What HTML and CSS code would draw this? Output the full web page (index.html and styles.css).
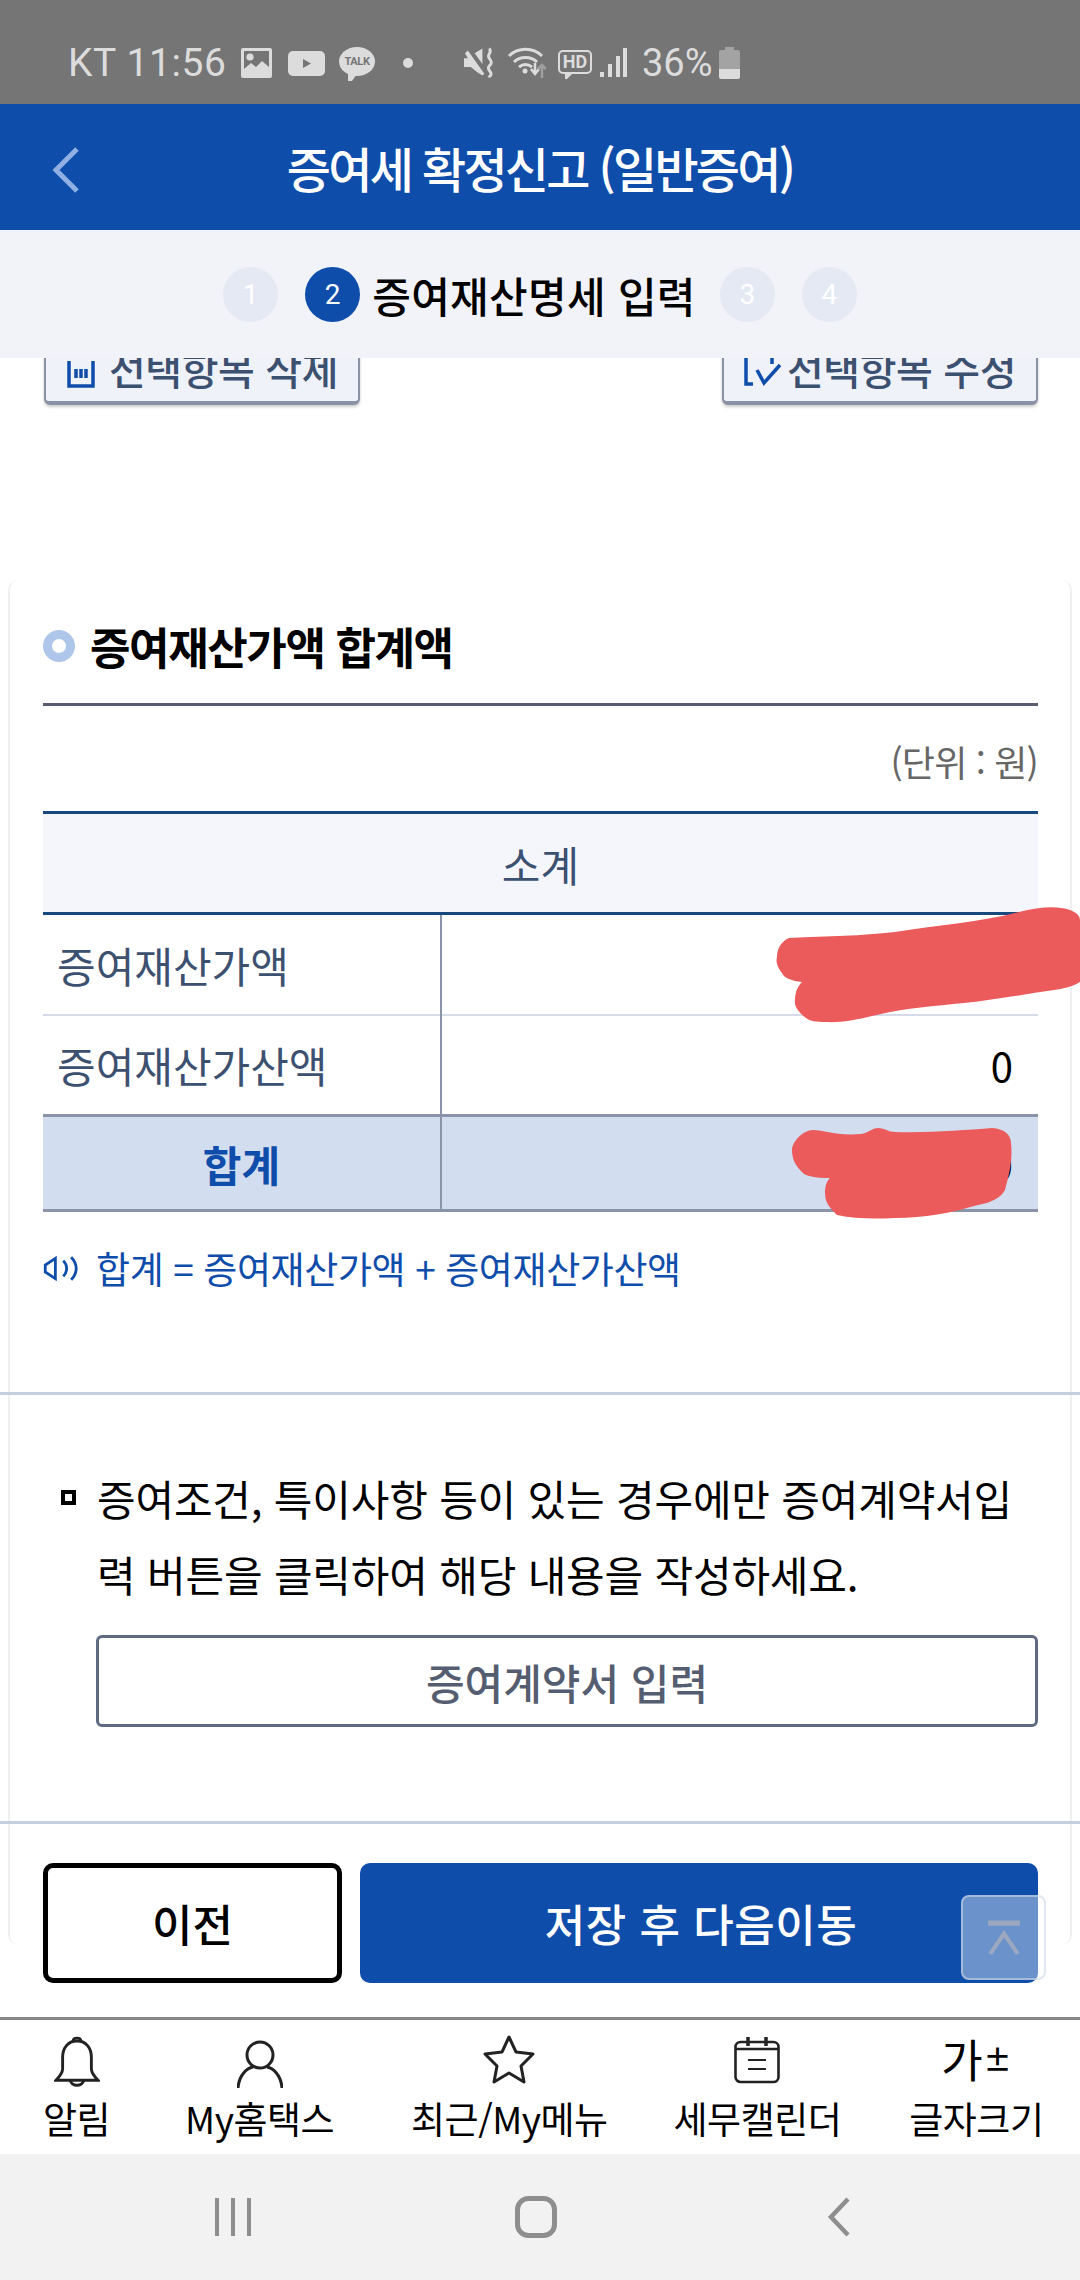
FILE: index.html
```html
<!DOCTYPE html>
<html lang="ko">
<head>
<meta charset="utf-8">
<title>증여세 확정신고</title>
<link rel="stylesheet" href="styles.css">
</head>
<body>
<div class="phone">
  <div class="status">
    <span class="status-text carrier">KT 11:56</span>
    <svg class="si si-img" viewBox="0 0 31 30"><path fill="#dcdcdc" fill-rule="evenodd" d="M2 0h27a2 2 0 0 1 2 2v26a2 2 0 0 1-2 2H2a2 2 0 0 1-2-2V2a2 2 0 0 1 2-2zm1 3v18l7-6 5 4 6-6 7 6V3z"/><circle cx="9" cy="9" r="3.6" fill="#dcdcdc"/></svg>
    <svg class="si si-yt" viewBox="0 0 37 25"><rect width="37" height="25" rx="5" fill="#dcdcdc"/><path d="M15 8l8 4.500-8 4.500z" fill="#757575"/></svg>
    <span class="si-talk"><span class="talk-label">TALK</span></span>
    <span class="si-dot"></span>
    <svg class="si si-mute" viewBox="0 0 32 32"><path fill="#dcdcdc" d="M0 11h4L1 6l3-3 17 24-2 2-6-4-6-5H0zM11 6l8-5v16z"/><path fill="none" stroke="#dcdcdc" stroke-width="3" d="M26 1c4 4-3 6 0 10s3 5 0 8 2 6 2 8-2 3-2 4"/></svg>
    <svg class="si si-wifi" viewBox="0 0 38 32"><g fill="none" stroke="#dcdcdc" stroke-width="3"><path d="M1 9c9-9 24-9 33 0"/><path d="M6 15c6-6 17-6 23 0"/><path d="M11 20c4-3 9-3 13 0"/></g><circle cx="17" cy="24" r="2.500" fill="#dcdcdc"/><path d="M27 16v9m-4-3l4 5 4-5" fill="none" stroke="#dcdcdc" stroke-width="2.500"/><path d="M34 31v-13m-4 4l4-4 4 4" fill="none" stroke="#a0a0a0" stroke-width="2.500"/></svg>
    <span class="si-hd">HD</span>
    <svg class="si si-sig" viewBox="0 0 27 32"><g fill="#dcdcdc"><rect x="0" y="25" width="4" height="5"/><rect x="8" y="17" width="4" height="13"/><rect x="16" y="9" width="4" height="21"/><rect x="23" y="1" width="4" height="29"/></g></svg>
    <span class="status-text pct">36%</span>
    <svg class="si si-bat" viewBox="0 0 21 32"><path fill="#a3a3a3" d="M6 0h9v3h4a2 2 0 0 1 2 2v17H0V5a2 2 0 0 1 2-2h4z"/><path fill="#dcdcdc" d="M0 22h21v8a2 2 0 0 1-2 2H2a2 2 0 0 1-2-2z"/></svg>
  </div>

  <header class="app-header">
    <svg class="back" viewBox="0 0 28 46"><path d="M25 2L4 23l21 21" fill="none" stroke="#8fb0e3" stroke-width="5"/></svg>
    <h1 class="app-title">증여세 확정신고 (일반증여)</h1>
  </header>

  <div class="stepper">
    <span class="step">1</span>
    <span class="step step-on">2</span>
    <span class="step-name">증여재산명세 입력</span>
    <span class="step step-3">3</span>
    <span class="step">4</span>
  </div>

  <main class="scroll">
    <div class="card-edge"></div>

    <div class="actions">
      <button class="act-btn">
        <svg class="act-icon icon-del" viewBox="0 0 30 38"><path d="M1 3h28M3 10v25h24V10M10 18v9M15 18v9M20 18v9" fill="none" stroke="#0f4dab" stroke-width="3.500"/></svg>
        선택항목 삭제
      </button>
      <button class="act-btn">
        <svg class="act-icon icon-edit" viewBox="0 0 40 38"><path d="M10 3H2v30h7M22 3h6v10" fill="none" stroke="#0f4dab" stroke-width="3.500"/><path d="M13 19l7 13 16-18" fill="none" stroke="#0f4dab" stroke-width="3.500"/></svg>
        선택항목 수정
      </button>
    </div>

    <section class="block">
      <h2 class="sec-title"><span class="ring"></span>증여재산가액 합계액</h2>
      <p class="unit">(단위 : 원)</p>
      <table class="sum">
        <colgroup><col class="col-a"><col></colgroup>
        <thead><tr><th colspan="2" class="sum-head">소계</th></tr></thead>
        <tbody>
          <tr class="row-1"><th class="lbl">증여재산가액</th><td class="val"></td></tr>
          <tr class="row-2"><th class="lbl">증여재산가산액</th><td class="val">0</td></tr>
          <tr class="row-t"><th class="lbl-t">합계</th><td class="val">0</td></tr>
        </tbody>
      </table>
      <p class="note">
        <svg class="note-icon" viewBox="0 0 32 24"><path d="M11 3L2 9v6l9 6z" fill="none" stroke="#0f4dab" stroke-width="2.500"/><path d="M18 5c4 4 4 10 0 14M25 2c6 6 6 14 0 20" fill="none" stroke="#0f4dab" stroke-width="2.500"/></svg>
        합계 = 증여재산가액 + 증여재산가산액
      </p>
    </section>

    <hr class="rule rule-a">

    <section class="block">
      <div class="para">
        <span class="sq"></span>
        <p class="para-text">증여조건, 특이사항 등이 있는 경우에만 증여계약서입력 버튼을 클릭하여 해당 내용을 작성하세요.</p>
      </div>
      <button class="contract">증여계약서 입력</button>
    </section>

    <hr class="rule rule-b">

    <div class="foot-btns">
      <button class="btn-prev">이전</button>
      <button class="btn-next">저장 후 다음이동</button>
    </div>

    <div class="to-top">
      <svg viewBox="0 0 32 34"><path d="M1 3h30" stroke="#9ba8bf" stroke-width="5"/><path d="M3 32l13-19 13 19" fill="none" stroke="#9ba8bf" stroke-width="4"/></svg>
    </div>

    <svg class="scribble" viewBox="0 358 1080 1659">
      <path fill="#ec5b5b" d="M789 938C830 936 860 936 895 932C940 925 980 922 1019 912C1035 908 1050 906 1061 908C1072 909 1080 914 1080 920L1080 982C1072 987 1062 989 1054 990C1025 994 995 1000 964 1003C935 1006 905 1008 881 1014C860 1019 842 1023 826 1022C815 1022 810 1021 806 1018C798 1012 794 1006 795 1000C795 992 798 986 802 982C792 981 784 978 782 973C776 965 776 960 777 957C777 948 782 941 789 938Z"/>
      <path fill="#ec5b5b" d="M792 1150C792 1142 803 1130 813 1130C825 1130 835 1136 861 1134C868 1133 872 1128 878 1128C885 1128 888 1132 895 1132C930 1133 965 1130 992 1128C1005 1129 1011 1135 1011 1143C1013 1160 1009 1175 1005 1190C1001 1198 990 1203 978 1205C950 1213 925 1218 895 1218C875 1219 855 1219 837 1215C830 1208 825 1203 825 1193C825 1187 826 1182 830 1178C815 1178 805 1176 802 1172C796 1166 792 1160 792 1150Z"/>
    </svg>
  </main>

  <nav class="tabbar">
    <a class="tab">
      <span class="tab-ic"><svg class="ti-bell" viewBox="0 0 48 56"><g fill="none" stroke="#222" stroke-width="3"><path d="M24 5c-10 0-15 8-15 17v12c0 4-3 8-7 12h44c-4-4-7-8-7-12V22c0-9-5-17-15-17z"/><path d="M20 5c0-4 8-4 8 0"/><path d="M17 46c1 7 13 7 14 0"/></g></svg></span>
      <span class="tab-label">알림</span>
    </a>
    <a class="tab">
      <span class="tab-ic"><svg class="ti-user" viewBox="0 0 46 50"><g fill="none" stroke="#222" stroke-width="3"><circle cx="23" cy="15" r="13"/><path d="M1 48c1-13 9-20 15-21M45 48c-1-13-9-20-15-21"/></g></svg></span>
      <span class="tab-label">My홈택스</span>
    </a>
    <a class="tab tab-c">
      <span class="tab-ic"><svg class="ti-star" viewBox="0 0 52 50"><path d="M26 2l7 15 17 2-12 12 3 16-15-9-15 9 3-16L2 19l17-2z" fill="none" stroke="#222" stroke-width="3" stroke-linejoin="round"/></svg></span>
      <span class="tab-label">최근/My메뉴</span>
    </a>
    <a class="tab tab-d">
      <span class="tab-ic"><svg class="ti-cal" viewBox="0 0 46 48"><g fill="none" stroke="#222" stroke-width="2.600"><rect x="1.500" y="6" width="43" height="40" rx="5"/><path d="M1.500 13h43"/><path d="M14 1v9M32 1v9" stroke-width="3.500"/><path d="M14 24h18M14 33h18" stroke-width="1.800"/></g></svg></span>
      <span class="tab-label">세무캘린더</span>
    </a>
    <a class="tab tab-e">
      <span class="tab-ic tab-ga"><span class="ga">가</span><span class="pm">±</span></span>
      <span class="tab-label">글자크기</span>
    </a>
  </nav>

  <div class="navbar">
    <svg class="nav-i nav-recent" viewBox="0 0 38 40"><path d="M3 1v38M19 1v38M35 1v38" stroke="#8e8e8e" stroke-width="4"/></svg>
    <svg class="nav-i nav-home" viewBox="0 0 42 42"><rect x="2.500" y="2.500" width="37" height="37" rx="11" fill="none" stroke="#8e8e8e" stroke-width="5"/></svg>
    <svg class="nav-i nav-back" viewBox="0 0 24 40"><path d="M21 2L4 20l17 18" fill="none" stroke="#8e8e8e" stroke-width="4.500"/></svg>
  </div>
</div>
</body>
</html>
```

FILE: styles.css
```css
* { box-sizing: border-box; }
html, body { margin: 0; padding: 0; background: #fff; }
body { font-family: "Noto Sans CJK KR", "Noto Sans", sans-serif; color: #000; }
button { font-family: inherit; cursor: pointer; padding: 0; }
p, h1, h2 { margin: 0; }

.phone { width: 1080px; height: 2280px; display: flex; flex-direction: column; overflow: hidden; }

/* status bar */
.status { height: 104px; flex: none; background: #757575; display: flex; align-items: center; padding: 22px 0 0 68px; }
.status-text { font-family: Roboto, sans-serif; font-size: 38px; color: #dcdcdc; line-height: 44px; }
.carrier { width: 156px; font-size: 39px; letter-spacing: 0.6px; white-space: nowrap; }
.si { display: block; flex: none; }
.si-img { width: 31px; height: 30px; margin-left: 17px; }
.si-yt { width: 37px; height: 25px; margin-left: 16px; }
.si-talk { width: 36px; height: 29px; margin: -4px 0 0 14px; border-radius: 50%; background: #dcdcdc; display: flex; align-items: center; justify-content: center; position: relative; }
.si-talk::after { content: ""; position: absolute; left: 9px; bottom: -5px; border-left: 4px solid #dcdcdc; border-right: 5px solid transparent; border-top: 7px solid #dcdcdc; }
.talk-label { font-family: Roboto, sans-serif; font-size: 11px; font-weight: 700; color: #757575; letter-spacing: -0.4px; }
.si-dot { width: 10px; height: 10px; border-radius: 50%; background: #dcdcdc; margin-left: 28px; }
.si-mute { width: 31px; height: 32px; margin-left: 51px; }
.si-wifi { width: 38px; height: 32px; margin-left: 13px; }
.si-hd { width: 34px; height: 24px; margin: -3px 0 0 12px; border: 2px solid #dcdcdc; border-radius: 5px; font-family: Roboto, sans-serif; font-size: 18px; font-weight: 700; line-height: 20px; text-align: center; color: #dcdcdc; position: relative; }
.si-hd::after { content: ""; position: absolute; left: 5px; bottom: -7px; border-left: 2px solid #dcdcdc; border-right: 5px solid transparent; border-top: 5px solid #dcdcdc; }
.si-sig { width: 27px; height: 32px; margin-left: 8px; }
.pct { margin-left: 15px; width: 71px; white-space: nowrap; }
.si-bat { width: 21px; height: 32px; margin-left: 6px; }

/* header */
.app-header { height: 126px; flex: none; background: #0f4dab; display: flex; align-items: center; justify-content: center; position: relative; }
.back { position: absolute; left: 52px; top: 43px; width: 28px; height: 46px; }
.app-title { font-size: 48px; font-weight: 500; color: #fff; letter-spacing: -2.700px; white-space: nowrap; }

/* stepper */
.stepper { height: 128px; flex: none; background: #f1f3f9; display: flex; align-items: center; justify-content: center; }
.step { width: 55px; height: 55px; border-radius: 50%; background: #e4e9f4; color: #fff; font-family: Roboto, sans-serif; font-size: 28px; display: flex; align-items: center; justify-content: center; margin-left: 27px; }
.step:first-child { margin-left: 0; }
.step-on { background: #0f4dab; }
.step-3 { margin-left: 24px; }
.step-name { font-size: 42px; font-weight: 500; margin-left: 12px; letter-spacing: 0.3px; white-space: nowrap; }

/* scroll area */
.scroll { flex: 1; position: relative; overflow: hidden; background: #fff; z-index: 0; }
.card-edge { position: absolute; z-index: -1; left: 8px; right: 8px; top: 222px; height: 1365px; border: 2px solid #f0f0f0; border-top: 0; border-bottom: 0; border-radius: 10px; }

.actions { height: 52px; overflow: hidden; display: flex; justify-content: space-between; padding: 0 42px 0 44px; position: relative; }
.act-btn { width: 316px; height: 73px; margin-top: -26px; background: #eff2f9; border: 2px solid #8a93a5; border-bottom-width: 4px; border-radius: 6px; color: #3c5070; font-size: 40px; font-weight: 500; display: flex; align-items: center; justify-content: center; white-space: nowrap; box-shadow: 0 2px 3px rgba(0,0,0,.2); letter-spacing: -0.4px; }
.act-icon { height: 38px; flex: none; margin-top: 4px; }
.icon-del { width: 30px; margin-right: 13px; }
.icon-edit { width: 40px; margin-right: 3px; }

.block { padding: 0 42px 0 43px; position: relative; }
.sec-title { padding-bottom: 25px; font-size: 44px; font-weight: 700; line-height: 64px; letter-spacing: -1.400px; border-bottom: 3px solid #5a5d70; display: flex; align-items: center; gap: 15px; white-space: nowrap; }
.ring { width: 32px; height: 32px; border-radius: 50%; border: 9px solid #aec6e9; flex: none; }
.actions + .block { padding-top: 204px; }
.unit { margin-top: 30px; margin-bottom: 25px; font-size: 36px; line-height: 50px; text-align: right; color: #666; letter-spacing: -0.800px; }

.sum { width: 100%; border-collapse: collapse; table-layout: fixed; }
.col-a { width: 398px; }
.sum-head { height: 101px; background: #f4f6fb; border-top: 3px solid #17497f; border-bottom: 3px solid #17497f; font-size: 42px; font-weight: 400; color: #3c5070; }
.lbl { font-size: 42px; font-weight: 400; color: #3c5070; text-align: left; padding: 0 0 0 14px; border-right: 2px solid #8a93a8; white-space: nowrap; }
.lbl-t { font-size: 42px; font-weight: 700; color: #0f4dab; text-align: center; border-right: 2px solid #8a93a8; }
.val { font-size: 40px; text-align: right; padding: 0 25px 0 0; }
.row-1 { height: 101px; border-bottom: 2px solid #d5dbe8; }
.row-2 { height: 101px; border-bottom: 3px solid #8a93a8; }
.row-t { height: 95px; background: #d2deef; border-bottom: 3px solid #8a93a8; }

.note { margin-top: 31px; font-size: 37px; line-height: 50px; color: #0f4dab; display: flex; align-items: center; gap: 17px; letter-spacing: -0.400px; white-space: nowrap; }
.note-icon { width: 36px; height: 27px; flex: none; }

.rule { border: 0; height: 3px; background: #c5d0de; margin: 0; }
.rule-a { margin-top: 99px; }
.rule-b { margin-top: 94px; }

.para { display: flex; align-items: flex-start; margin-top: 65px; }
.sq { width: 15px; height: 15px; border: 4px solid #000; margin: 30px 0 0 18px; flex: none; }
.para-text { margin-left: 21px; font-size: 42px; line-height: 76px; letter-spacing: -0.200px; }
.contract { display: block; width: 942px; height: 92px; margin: 23px 0 0 53px; background: #fff; border: 3px solid #5f6a80; border-radius: 6px; font-size: 42px; font-weight: 500; color: #555e70; letter-spacing: 0; }

.foot-btns { display: flex; gap: 18px; padding: 0 42px 0 43px; margin-top: 39px; }
.btn-prev { width: 299px; height: 120px; background: #fff; border: 5px solid #000; border-radius: 10px; font-size: 44px; font-weight: 500; color: #000; }
.btn-next { flex: 1; height: 120px; background: #0f4dab; border: 0; border-radius: 10px; font-size: 44px; font-weight: 500; color: #fff; padding-left: 4px; letter-spacing: 0.5px; }

.to-top { position: absolute; left: 961px; top: 1537px; width: 85px; height: 85px; background: rgba(255,255,255,.39); border: 2px solid rgba(205,215,230,.6); border-radius: 8px; display: flex; align-items: center; justify-content: center; }
.to-top svg { width: 34px; height: 36px; }

.scribble { position: absolute; left: 0; top: 0; width: 1080px; height: 1659px; pointer-events: none; }

/* tab bar */
.tabbar { height: 137px; flex: none; border-top: 3px solid #888; background: #fff; display: flex; gap: 75px; padding: 0 0 0 43px; }
.tab { display: flex; flex-direction: column; align-items: center; }
.tab-c { margin-left: 2px; }
.tab-d { margin-left: -9px; }
.tab-e { margin-left: -7px; }
.tab-ic { height: 74px; display: flex; align-items: flex-end; justify-content: center; padding-bottom: 4px; }
.tab-label { font-size: 37px; line-height: 48px; letter-spacing: -0.500px; white-space: nowrap; }
.ti-bell { width: 46px; height: 54px; }
.ti-user { width: 46px; height: 50px; }
.ti-star { width: 52px; height: 52px; margin-bottom: 4px; }
.ti-cal { width: 46px; height: 48px; margin-bottom: 6px; }
.tab-ga { align-items: center; padding-top: 8px; gap: 1px; }
.ga { font-size: 45px; font-weight: 400; line-height: 50px; }
.pm { font-size: 28px; line-height: 40px; font-weight: 700; }

/* nav bar */
.navbar { height: 126px; flex: none; background: #f2f2f2; position: relative; display: flex; align-items: center; padding: 0 0 0 214px; }
.nav-i { display: block; flex: none; }
.nav-recent { width: 38px; height: 40px; }
.nav-home { width: 42px; height: 42px; margin-left: 263px; }
.nav-back { width: 24px; height: 40px; margin-left: 270px; }
```
